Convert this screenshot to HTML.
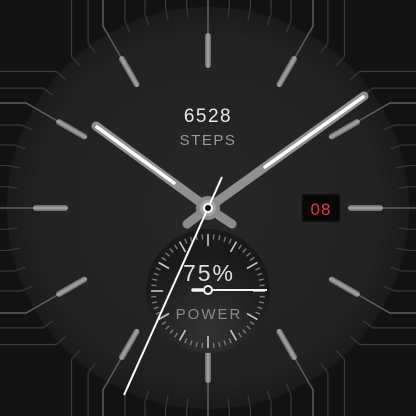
<!DOCTYPE html>
<html><head><meta charset="utf-8"><style>
html,body{margin:0;padding:0;background:#121212;}
svg{display:block}
text{font-family:"Liberation Sans",sans-serif}
</style></head><body>
<svg id="s" width="416" height="416" viewBox="0 0 416 416" xmlns="http://www.w3.org/2000/svg">
<defs>
<radialGradient id="dial" cx="208" cy="208" r="202" gradientUnits="userSpaceOnUse">
<stop offset="0" stop-color="#272727"/><stop offset="0.85" stop-color="#222"/><stop offset="1" stop-color="#1a1a1a"/>
</radialGradient>
<radialGradient id="sub" cx="208" cy="330" r="75" gradientUnits="userSpaceOnUse">
<stop offset="0" stop-color="#333"/><stop offset="1" stop-color="#1a1a1a"/>
</radialGradient>
<linearGradient id="pill" x1="0" y1="0" x2="1" y2="0">
<stop offset="0" stop-color="#666"/><stop offset="0.5" stop-color="#a8a8a8"/><stop offset="1" stop-color="#666"/>
</linearGradient>
</defs>
<rect width="416" height="416" fill="#121212"/>
<g id="outer" fill="none"></g>
<circle cx="208" cy="208" r="201" fill="url(#dial)"/>
<g id="inner"></g>
<text x="208" y="122" fill="#e8e8e8" font-size="19" text-anchor="middle" letter-spacing="1.5">6528</text>
<text x="208" y="145" fill="#9a9a9a" font-size="15" text-anchor="middle" letter-spacing="1.5">STEPS</text>
<rect x="302" y="194" width="38" height="28" fill="#070707" stroke="#1c1c1c"/>
<text x="321" y="215" fill="#f0362e" font-size="17" text-anchor="middle" letter-spacing="1">08</text>
<circle cx="208" cy="291" r="62" fill="url(#sub)"/>
<g id="subt"></g>
<text x="209" y="281" fill="#e0e0e0" font-size="23" text-anchor="middle" letter-spacing="2">75%</text>
<text x="209" y="319" fill="#8a8a8a" font-size="15" text-anchor="middle" letter-spacing="2">POWER</text>
<line x1="192" y1="290" x2="267" y2="290" stroke="#f2f2f2" stroke-width="2"/>
<line x1="193" y1="290" x2="208" y2="290" stroke="#f2f2f2" stroke-width="3.5" stroke-linecap="round"/>
<circle cx="208" cy="290" r="4" fill="#222" stroke="#f2f2f2" stroke-width="2"/>
<!-- stubs -->
<line x1="208" y1="208" x2="187" y2="224" stroke="#8c8c8c" stroke-width="9" stroke-linecap="round"/>
<line x1="208" y1="208" x2="232" y2="224" stroke="#8c8c8c" stroke-width="9" stroke-linecap="round"/>
<!-- hour hand -->
<line x1="208" y1="208" x2="96" y2="126" stroke="#909090" stroke-width="9" stroke-linecap="round"/>
<line x1="174" y1="183" x2="97" y2="127" stroke="#fff" stroke-width="3.5" stroke-linecap="round"/>
<!-- minute hand -->
<line x1="208" y1="208" x2="364" y2="96" stroke="#909090" stroke-width="9" stroke-linecap="round"/>
<line x1="265" y1="167" x2="363" y2="97" stroke="#fff" stroke-width="3.5" stroke-linecap="round"/>
<circle cx="208" cy="208" r="12" fill="#8a8a8a"/>
<circle cx="208" cy="208" r="8" fill="#a5a5a5"/>
<!-- seconds -->
<line x1="124" y1="395" x2="222" y2="177" stroke="#fff" stroke-width="2"/>
<circle cx="208" cy="208" r="4" fill="#000" stroke="#fff" stroke-width="2"/>
</svg>
<script>
var NS="http://www.w3.org/2000/svg",c=208;
function el(p,t,a){var e=document.createElementNS(NS,t);for(var k in a)e.setAttribute(k,a[k]);p.appendChild(e);return e;}
var outer=document.getElementById('outer'),inner=document.getElementById('inner'),subt=document.getElementById('subt');
for(var i=0;i<60;i++){
 var a=i*6*Math.PI/180,dx=Math.sin(a),dy=-Math.cos(a);
 var hr=i%5==0, r1=hr?178:192, r2=hr?210:204;
 var x1=c+dx*r1,y1=c+dy*r1,x2=c+dx*r2,y2=c+dy*r2,x3,y3;
 if(Math.abs(dy)>Math.abs(dx)){x3=x2;y3=dy<0?-2:418;}else{y3=y2;x3=dx<0?-2:418;}
 el(outer,'polyline',{points:x1+','+y1+' '+x2+','+y2+' '+x3+','+y3,stroke:hr?'#5e5e5e':'#3a3a3a','stroke-width':hr?1.5:1.2});
 if(hr){
  var ang=i*6;
  el(inner,'rect',{x:c-3,y:c-175,width:6,height:35,rx:3,fill:'url(#pill)',transform:'rotate('+ang+' '+c+' '+c+')'});
  el(inner,'line',{x1:c+dx*175,y1:c+dy*175,x2:c+dx*201,y2:c+dy*201,stroke:'#5e5e5e','stroke-width':1.5});
 } else {
  el(inner,'line',{x1:c+dx*192,y1:c+dy*192,x2:c+dx*201,y2:c+dy*201,stroke:'#3a3a3a','stroke-width':1.2});
 }
}
var sc=208,sy=291;
for(var j=0;j<60;j++){
 var b=j*6*Math.PI/180,ex=Math.sin(b),ey=-Math.cos(b),mj=j%5==0;
 var ra=mj?45:52,rb=57;
 el(subt,'line',{x1:sc+ex*ra,y1:sy+ey*ra,x2:sc+ex*rb,y2:sy+ey*rb,'stroke-width':mj?1.6:1.4,stroke:mj?'#c8c8c8':'#7a7a7a'});
}
</script>
</body></html>
